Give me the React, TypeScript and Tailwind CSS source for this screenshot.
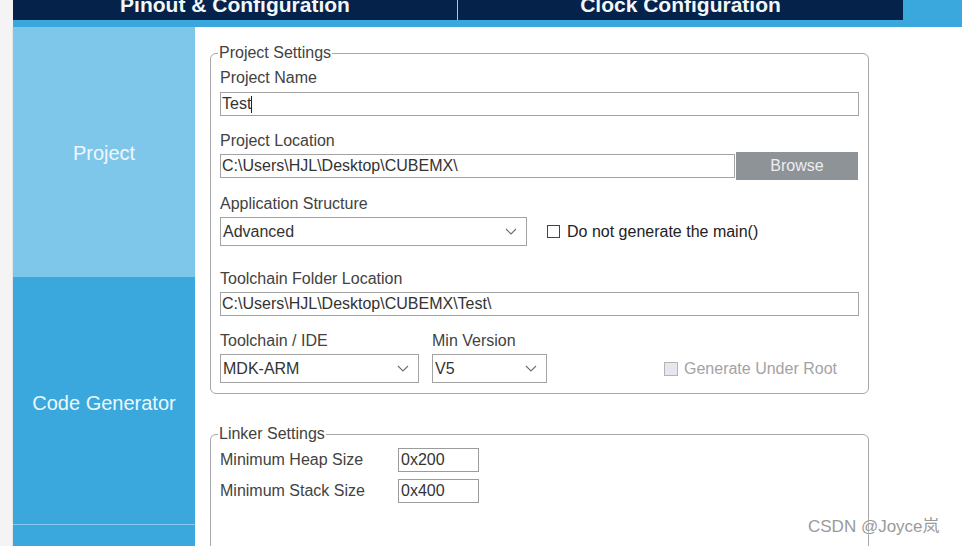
import React from "react";

const font = { fontFamily: '"Liberation Sans", Arial, "Noto Sans CJK SC", sans-serif' };

function Chevron() {
  return (
    <svg width="12" height="7" viewBox="0 0 12 7" fill="none">
      <polyline points="1,1 6,6 11,1" stroke="#6f6f6f" strokeWidth="1.1" />
    </svg>
  );
}

function Select({ value, width }: { value: string; width: string }) {
  return (
    <div
      className={`${width} h-[29px] border border-[#a3a3a3] bg-white flex items-center justify-between pl-[2px] pr-[9px] text-[16px] text-[#333]`}
    >
      <span>{value}</span>
      <Chevron />
    </div>
  );
}

function TextBox({ value, width, cursor }: { value: string; width: string; cursor?: boolean }) {
  return (
    <div
      className={`${width} h-[24px] border border-[#a3a3a3] bg-white flex items-center pl-[1px] text-[16px] text-[#333] leading-none`}
    >
      <span>{value}</span>
      {cursor && <span className="w-[1px] h-[17px] bg-[#222]" />}
    </div>
  );
}

function Label({ children, className = "" }: { children: React.ReactNode; className?: string }) {
  return <div className={`h-[18px] leading-[18px] text-[16px] text-[#424242] ${className}`}>{children}</div>;
}

export default function App() {
  return (
    <div className="w-[962px] h-[546px] overflow-hidden bg-white flex flex-col relative" style={font}>
      {/* top tabs, scrolled so the labels are cut at the top */}
      <div className="h-[20px] flex shrink-0 overflow-hidden">
        <div className="w-[13px] bg-[#f4f4f4]" />
        <div className="w-[444px] bg-[#04224a] flex justify-center">
          <span className="-mt-[6px] leading-[22px] text-[21px] font-bold text-[#f4f6f8]">Pinout &amp; Configuration</span>
        </div>
        <div className="w-[1px] bg-[#b8c2cc]" />
        <div className="w-[445px] bg-[#04224a] flex justify-center">
          <span className="-mt-[6px] leading-[22px] text-[21px] font-bold text-[#f4f6f8]">Clock Configuration</span>
        </div>
        <div className="flex-1 bg-[#3aa8dc]" />
      </div>
      <div className="h-[7px] flex shrink-0">
        <div className="w-[13px] bg-[#f4f4f4]" />
        <div className="flex-1 bg-[#3aa8dc]" />
      </div>

      <div className="flex flex-1">
        <div className="w-[13px] bg-[#f4f4f4] border-r border-[#e6e6e6]" />
        {/* sidebar */}
        <div className="w-[182px] flex flex-col">
          <div className="h-[250px] bg-[#7fc7ea] flex items-center justify-center pt-[2px] text-[20px] text-[#eef8fd]">
            Project
          </div>
          <div className="h-[247px] bg-[#3aa8dc] flex items-center justify-center pt-[5px] text-[20px] text-[#eef8fd]">
            Code Generator
          </div>
          <div className="h-[1px] bg-[#86c9ec]" />
          <div className="flex-1 bg-[#3aa8dc]" />
        </div>

        {/* content */}
        <div className="flex-1 pl-[15px] pt-[17px]">
          <fieldset className="w-[659px] border border-[#a6a6ac] rounded-[6px] px-[9px] pb-[10px]">
            <legend className="ml-[-2px] px-[1px] text-[16px] leading-[18px] text-[#424242]">Project Settings</legend>
            <Label className="mt-[7px]">Project Name</Label>
            <div className="mt-[5px]">
              <TextBox value="Test" width="w-[639px]" cursor />
            </div>
            <Label className="mt-[16px]">Project Location</Label>
            <div className="mt-[2px] flex items-center h-[28px]">
              <TextBox value="C:\Users\HJL\Desktop\CUBEMX\" width="w-[515px]" />
              <div className="ml-[1px] w-[122px] h-[28px] bg-[#8e9398] flex items-center justify-center text-[16px] text-[#eceeef]">
                Browse
              </div>
            </div>
            <Label className="mt-[15px]">Application Structure</Label>
            <div className="mt-[4px] flex items-center">
              <Select value="Advanced" width="w-[307px]" />
              <div className="ml-[20px] w-[13px] h-[13px] border border-[#444] bg-white" />
              <span className="ml-[7px] text-[16px] text-[#222]">Do not generate the main()</span>
            </div>
            <Label className="mt-[24px]">Toolchain Folder Location</Label>
            <div className="mt-[4px]">
              <TextBox value="C:\Users\HJL\Desktop\CUBEMX\Test\" width="w-[639px]" />
            </div>
            <div className="mt-[16px] flex">
              <div className="flex flex-col">
                <Label>Toolchain / IDE</Label>
                <div className="mt-[4px]">
                  <Select value="MDK-ARM" width="w-[199px]" />
                </div>
              </div>
              <div className="ml-[13px] flex flex-col">
                <Label>Min Version</Label>
                <div className="mt-[4px]">
                  <Select value="V5" width="w-[115px]" />
                </div>
              </div>
              <div className="ml-[117px] self-end h-[29px] flex items-center">
                <div className="w-[14px] h-[14px] border border-[#b4b4b4] bg-[#e4e8ee]" />
                <span className="ml-[6px] text-[16px] text-[#a3a3a3]">Generate Under Root</span>
              </div>
            </div>
          </fieldset>

          <fieldset className="mt-[31px] w-[659px] h-[160px] border border-[#a6a6ac] rounded-[6px] px-[9px]">
            <legend className="ml-[-2px] px-[1px] text-[16px] leading-[18px] text-[#424242]">Linker Settings</legend>
            <div className="mt-[5px] flex items-center">
              <Label className="w-[178px]">Minimum Heap Size</Label>
              <div className="w-[81px] h-[24px] border border-[#9c9c9c] flex items-center pl-[2px] text-[16px] text-[#333]">
                0x200
              </div>
            </div>
            <div className="mt-[7px] flex items-center">
              <Label className="w-[178px]">Minimum Stack Size</Label>
              <div className="w-[81px] h-[24px] border border-[#9c9c9c] flex items-center pl-[2px] text-[16px] text-[#333]">
                0x400
              </div>
            </div>
          </fieldset>
        </div>
      </div>

      {/* watermark */}
      <div className="absolute left-[808px] top-[514px] text-[17px] text-[#9a9a9a] [text-shadow:0_0_2px_#fff]">
        CSDN @Joyce岚
      </div>
    </div>
  );
}
